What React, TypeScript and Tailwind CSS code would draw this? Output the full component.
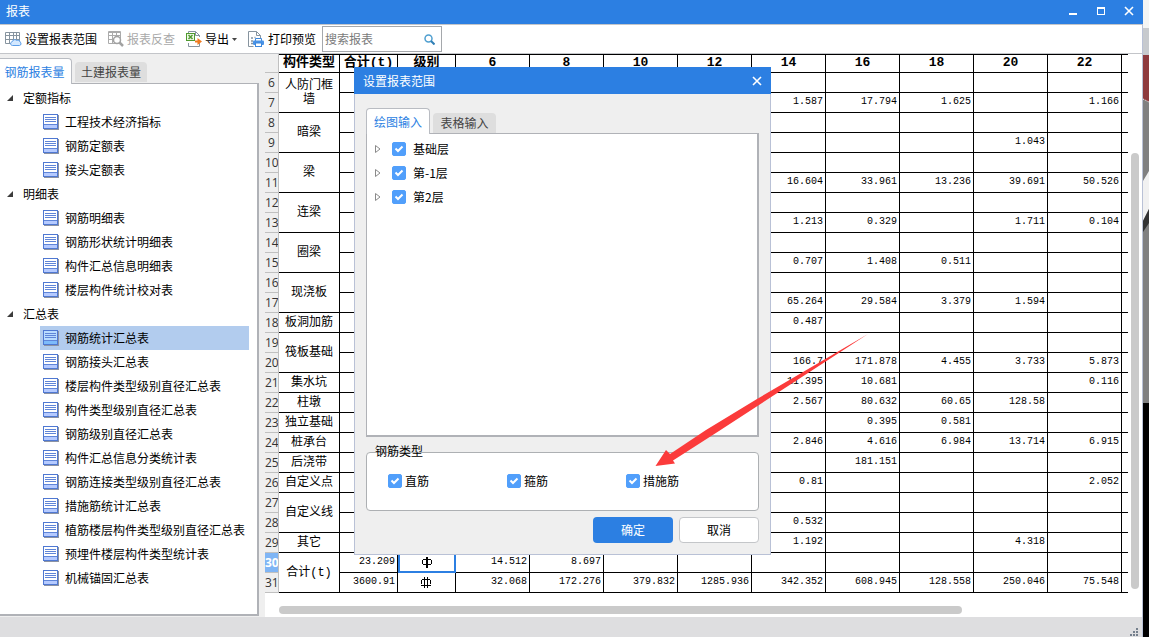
import { useState } from 'react'
import type { ReactNode } from 'react'

const treeGroups = [
  { label: '定额指标', items: ['工程技术经济指标', '钢筋定额表', '接头定额表'] },
  { label: '明细表', items: ['钢筋明细表', '钢筋形状统计明细表', '构件汇总信息明细表', '楼层构件统计校对表'] },
  {
    label: '汇总表',
    items: [
      '钢筋统计汇总表',
      '钢筋接头汇总表',
      '楼层构件类型级别直径汇总表',
      '构件类型级别直径汇总表',
      '钢筋级别直径汇总表',
      '构件汇总信息分类统计表',
      '钢筋连接类型级别直径汇总表',
      '措施筋统计汇总表',
      '植筋楼层构件类型级别直径汇总表',
      '预埋件楼层构件类型统计表',
      '机械锚固汇总表',
    ],
  },
]

const diameters = ['6', '8', '10', '12', '14', '16', '18', '20', '22']

type Row = {
  no: number
  type?: string
  span?: number
  total?: string
  grade?: 'two' | 'three'
  values?: Record<string, string>
}

const rows: Row[] = [
  { no: 6, type: '人防门框墙', span: 2 },
  { no: 7, values: { '14': '1.587', '16': '17.794', '18': '1.625', '22': '1.166' } },
  { no: 8, type: '暗梁', span: 2 },
  { no: 9, values: { '20': '1.043' } },
  { no: 10, type: '梁', span: 2 },
  { no: 11, values: { '14': '16.604', '16': '33.961', '18': '13.236', '20': '39.691', '22': '50.526' } },
  { no: 12, type: '连梁', span: 2 },
  { no: 13, values: { '14': '1.213', '16': '0.329', '20': '1.711', '22': '0.104' } },
  { no: 14, type: '圈梁', span: 2 },
  { no: 15, values: { '14': '0.707', '16': '1.408', '18': '0.511' } },
  { no: 16, type: '现浇板', span: 2 },
  { no: 17, values: { '14': '65.264', '16': '29.584', '18': '3.379', '20': '1.594' } },
  { no: 18, type: '板洞加筋', span: 1, values: { '14': '0.487' } },
  { no: 19, type: '筏板基础', span: 2 },
  { no: 20, values: { '14': '166.7', '16': '171.878', '18': '4.455', '20': '3.733', '22': '5.873' } },
  { no: 21, type: '集水坑', span: 1, values: { '14': '11.395', '16': '10.681', '22': '0.116' } },
  { no: 22, type: '柱墩', span: 1, values: { '14': '2.567', '16': '80.632', '18': '60.65', '20': '128.58' } },
  { no: 23, type: '独立基础', span: 1, values: { '16': '0.395', '18': '0.581' } },
  { no: 24, type: '桩承台', span: 1, values: { '14': '2.846', '16': '4.616', '18': '6.984', '20': '13.714', '22': '6.915' } },
  { no: 25, type: '后浇带', span: 1, values: { '16': '181.151' } },
  { no: 26, type: '自定义点', span: 1, values: { '14': '0.81', '22': '2.052' } },
  { no: 27, type: '自定义线', span: 2 },
  { no: 28, values: { '14': '0.532' } },
  { no: 29, type: '其它', span: 1, values: { '14': '1.192', '20': '4.318' } },
  { no: 30, type: '合计(t)', span: 2, total: '23.209', grade: 'two', values: { '6': '14.512', '8': '8.697' } },
  {
    no: 31,
    total: '3600.91',
    grade: 'three',
    values: {
      '6': '32.068',
      '8': '172.276',
      '10': '379.832',
      '12': '1285.936',
      '14': '342.352',
      '16': '608.945',
      '18': '128.558',
      '20': '250.046',
      '22': '75.548',
    },
  },
]

function SheetIcon({ active }: { active: boolean }) {
  return (
    <svg width="16" height="16" viewBox="0 0 16 16" shapeRendering="crispEdges" className="shrink-0" aria-hidden="true">
      <path d="M1 15.5h15M15.5 1v15" stroke="#8c93a3" />
      <rect x="0.5" y="0.5" width="14" height="14" fill={active ? '#b9dcff' : '#ffffff'} stroke="#4f78d2" />
      <rect x="1" y="10" width="13" height="4" fill={active ? '#7dbbfb' : '#b5caff'} />
      <path d="M2 3.5h11M2 5.5h11M2 7.5h11M1 10.5h13" stroke="#5f85d8" />
    </svg>
  )
}

function RangeIcon() {
  return (
    <svg width="17" height="16" viewBox="0 0 17 16" fill="none" aria-hidden="true">
      <path d="M0.5 1.5h14v11h-14zM0.5 4.5h14M0.5 8.5h14M4.5 1.5v11M8.5 1.5v11M11.5 1.5v7" stroke="#87949f" />
      <path d="M7.500 14.500c-2.500 0-2.500-3.500 0-4 0-2 3-2.500 4-1 2-.8 3.500 0 3.500 1.500 1.500.500 1.300 3.500-.500 3.500z" fill="#d3e8ff" stroke="#5b9de8" />
    </svg>
  )
}

function CheckBackIcon() {
  return (
    <svg width="16" height="16" viewBox="0 0 16 16" fill="none" aria-hidden="true">
      <path d="M0.500 0.500h12v12h-12zM0.500 4.500h12M0.500 8.500h12M4.500 0.500v12M8.500 0.500v8" stroke="#ababab" />
      <path d="M1 1.500h11" stroke="#ababab" />
      <circle cx="9" cy="9" r="3.500" fill="#fff" stroke="#a2a2a2" strokeWidth="1.500" />
      <path d="M11.500 11.500l3.500 3.500" stroke="#a2a2a2" strokeWidth="2.500" />
    </svg>
  )
}

function ExportIcon() {
  return (
    <svg width="16" height="16" viewBox="0 0 16 16" fill="none" aria-hidden="true">
      <path d="M2.500 2V0.500h7l4 4V6M13.500 12v3.500h-11V12M9.500 0.500v4h4" stroke="#87949f" />
      <rect x="0.500" y="2.500" width="8" height="7" fill="#eef7e6" stroke="#4f9a2f" />
      <path d="M2.500 4l4 4M6.500 4l-4 4" stroke="#4f9a2f" strokeWidth="1.500" />
      <path d="M9 9.500h2.500V7L16 10.500 11.500 14v-2.500H9z" fill="#f07b20" />
    </svg>
  )
}

function PrintIcon() {
  return (
    <svg width="17" height="16" viewBox="0 0 17 16" fill="none" aria-hidden="true">
      <path d="M12.500 7V4.500l-4-4h-8v15h5M8.500 0.500v4h4" stroke="#87949f" />
      <path d="M3 7h2M3 10h2M3 12.500h2M6.500 6.500h1" stroke="#87949f" strokeWidth="1.500" />
      <path d="M7.500 10V7.500h6V10" stroke="#3e88dc" />
      <rect x="5" y="9.500" width="11" height="4.500" rx="1" fill="#4a93e6" />
      <rect x="7.500" y="12" width="6" height="3.500" fill="#fff" stroke="#3e88dc" />
    </svg>
  )
}

// steel grade marks used in the 级别 column
function GradeMark({ grade }: { grade: 'two' | 'three' }) {
  return (
    <svg
      width="11"
      height="11"
      viewBox="0 0 11 11"
      fill="none"
      stroke="#000"
      shapeRendering="crispEdges"
      className="mx-auto"
      role="img"
      aria-label={grade === 'two' ? 'HRB335' : 'HRB400'}
    >
      {grade === 'two' ? (
        <>
          <path d="M1 2.500h8M0.500 3v4M9.500 3v4M1 7.500h8" />
          <path d="M5 0v11" strokeWidth="2" />
        </>
      ) : (
        <>
          <path d="M1 2.500h8M0.500 3v4M9.500 3v4M0 8.500h10" />
          <path d="M3.500 0v11M6.500 0v11" />
        </>
      )}
    </svg>
  )
}

function ToolButton({ icon, children, disabled }: { icon: ReactNode; children: ReactNode; disabled?: boolean }) {
  return (
    <button
      disabled={disabled}
      className="flex h-6 shrink-0 items-center gap-[3px] rounded-sm pr-[6px] pl-[5px] text-black disabled:text-[#a9a9a9]"
    >
      {icon}
      {children}
    </button>
  )
}

function CheckField({ label }: { label: string }) {
  return (
    <label className="flex items-center gap-[3px]">
      <span className="grid">
        <input
          type="checkbox"
          defaultChecked
          className="peer col-start-1 row-start-1 size-3.5 appearance-none rounded-xs border border-[#519ffb] bg-white checked:bg-[#519ffb]"
        />
        <svg
          width="14"
          height="14"
          viewBox="0 0 14 14"
          fill="none"
          className="pointer-events-none invisible col-start-1 row-start-1 peer-checked:visible"
          aria-hidden="true"
        >
          <path d="M3.500 6.500L6 9l4.500-4.500" stroke="#fff" strokeWidth="2" />
        </svg>
      </span>
      {label}
    </label>
  )
}

function Sidebar() {
  const [selected, setSelected] = useState('钢筋统计汇总表')

  return (
    <aside className="flex w-[259px] shrink-0 flex-col pb-px">
      <div className="flex h-[29px] items-end gap-[3px]">
        <button className="z-10 -mb-px h-[26px] w-[72px] rounded-tr-sm border-t border-r border-[#b9bcc2] bg-white pr-[2px] text-[#2c7fe2]">
          钢筋报表量
        </button>
        <button className="mb-px h-5 w-[72px] rounded-t-sm bg-[#dedede] text-[#444]">土建报表量</button>
      </div>
      <nav className="flex-1 border-t border-r-2 border-b-2 border-[#b0b2b7] bg-white pt-[2px]">
        {treeGroups.map((group) => (
          <div key={group.label}>
            <button className="flex h-6 items-center gap-[10px] pl-[7px]">
              <svg width="6" height="6" viewBox="0 0 6 6" aria-hidden="true">
                <path d="M6 0v6H0z" fill="#3c3c3c" />
              </svg>
              {group.label}
            </button>
            {group.items.map((item) => (
              <button
                key={item}
                onClick={() => setSelected(item)}
                className={`ml-10 flex h-6 w-[209px] items-center gap-[6px] pl-[3px] whitespace-nowrap ${
                  item === selected ? 'bg-[#b2ccee]' : ''
                }`}
              >
                <SheetIcon active={item === selected} />
                {item}
              </button>
            ))}
          </div>
        ))}
      </nav>
    </aside>
  )
}

function ReportTable() {
  return (
    <table className="w-full table-fixed border-separate border-spacing-0 font-['Liberation_Mono','Noto_Sans_CJK_SC',monospace] text-black">
      <colgroup>
        <col className="w-[14px]" />
        <col className="w-[61px]" />
        <col className="w-[58px]" />
        <col className="w-[58px]" />
        {diameters.map((d) => (
          <col key={d} className="w-[74px]" />
        ))}
        <col />
      </colgroup>
      <thead>
        <tr className="h-[19px] text-[13px] leading-[15px]">
          <th className="border-r border-b border-[#c0c0c0] bg-[#efefef] p-0" />
          {['构件类型', '合计(t)', '级别', ...diameters].map((h) => (
            <th key={h} className="border-t border-r border-b border-black px-0 pt-0 pb-[2px] font-bold whitespace-nowrap">
              {h}
            </th>
          ))}
          <th className="border-t border-b border-black p-0" />
        </tr>
      </thead>
      <tbody>
        {rows.map((row) => (
          <tr key={row.no} className="h-5 text-[10px] leading-4">
            <th
              className={`overflow-hidden border-r border-b border-[#c0c0c0] p-0 text-center font-['Open_Sans',sans-serif] text-xs ${
                row.no === 30 ? 'bg-[#7fb5f5] font-bold text-white' : 'bg-[#efefef] font-normal text-[#333]'
              }`}
            >
              {row.no}
            </th>
            {row.type && (
              <td rowSpan={row.span} className="border-r border-b border-black px-[5px] py-0 text-center text-xs leading-[14px]">
                {row.type}
              </td>
            )}
            <td className="border-r border-b border-black pt-0 pr-[2px] pb-[2px] pl-0 text-right">{row.total}</td>
            <td
              className={`p-0 ${
                row.no === 30
                  ? 'border-r-2 border-b-2 border-l-2 border-[#2c7fe2]'
                  : 'border-r border-b border-black'
              }`}
            >
              {row.grade && <GradeMark grade={row.grade} />}
            </td>
            {diameters.map((d) => (
              <td key={d} className="border-r border-b border-black pt-0 pr-[2px] pb-[2px] pl-0 text-right">
                {row.values?.[d]}
              </td>
            ))}
            <td className="border-b border-black p-0" />
          </tr>
        ))}
      </tbody>
    </table>
  )
}

function RangeDialog() {
  return (
    <section
      role="dialog"
      aria-label="设置报表范围"
      className="absolute top-[67px] left-[354px] w-[417px] border-r border-b border-l border-[#b9c1d6] bg-[#efefef]"
    >
      <header className="-mx-px flex h-[27px] items-center justify-between bg-[#2c7fe2] pr-[9px] pl-[9px] text-white">
        <h2>设置报表范围</h2>
        <button aria-label="关闭">
          <svg width="10" height="10" viewBox="0 0 10 10" aria-hidden="true">
            <path d="M1 1l8 8M9 1l-8 8" stroke="#fff" strokeWidth="1.600" />
          </svg>
        </button>
      </header>
      <div className="px-[11px] pt-[14px] pb-[11px]">
        <div className="flex items-end gap-[3px]">
          <button className="z-10 -mb-px h-[26px] w-16 rounded-t-sm border-t border-r border-l border-[#b9bcc2] bg-white text-[#2c7fe2]">
            绘图输入
          </button>
          <button className="h-5 w-[63px] rounded-t-sm bg-[#dedede] text-[#444]">表格输入</button>
        </div>
        <div className="h-[304px] border border-r-2 border-b-2 border-[#b0b2b7] bg-white pt-[3px]">
          {['基础层', '第-1层', '第2层'].map((floor) => (
            <div key={floor} className="flex h-6 items-center gap-[11px] pl-2">
              <button aria-label={`展开${floor}`}>
                <svg width="6" height="8" viewBox="0 0 6 8" fill="none" aria-hidden="true">
                  <path d="M0.500 0.500v7L5 4z" stroke="#8a8a8a" />
                </svg>
              </button>
              <div className="[&>label]:gap-[7px]">
                <CheckField label={floor} />
              </div>
            </div>
          ))}
        </div>
        <fieldset className="mt-[6px]">
          <legend className="relative ml-[9px] leading-4">钢筋类型</legend>
          <div className="-mt-[7px] grid grid-cols-[119px_119px_1fr] rounded-sm border border-[#adb0b3] bg-white px-[21px] pt-5 pb-[21px] leading-4">
            <CheckField label="直筋" />
            <CheckField label="箍筋" />
            <CheckField label="措施筋" />
          </div>
        </fieldset>
        <div className="mt-[6px] flex justify-end gap-[6px]">
          <button className="h-[26px] w-20 rounded-sm bg-[#2c7fe2] text-white">确定</button>
          <button className="h-[26px] w-20 rounded-sm border border-[#c4c6c9] bg-white">取消</button>
        </div>
      </div>
    </section>
  )
}

function Arrow() {
  return (
    <svg
      width="220"
      height="140"
      viewBox="650 330 220 140"
      className="pointer-events-none absolute top-[330px] left-[650px]"
      aria-hidden="true"
    >
      <path d="M655.500 466L666 450l4 4L706 430l51-31L868 334 765 401l-46 30-46 29.500 2 3z" fill="#fb3b3b" />
    </svg>
  )
}

export default function App() {
  return (
    <div className="relative flex min-h-screen overflow-hidden bg-[#efefef] font-['Noto_Sans_CJK_SC',sans-serif] text-xs text-black">
      <div className="flex min-w-0 flex-1 flex-col border-r border-[#b9c1d6]">
        <header className="-mr-px flex h-6 items-center justify-between bg-[#2c7fe2] pr-[9px] pb-[2px] pl-[6px] text-white">
          <h1>报表</h1>
          <div className="flex gap-[18px]">
            <button aria-label="最小化">
              <svg width="10" height="10" viewBox="0 0 10 10" aria-hidden="true">
                <path d="M1 8h8" stroke="#fff" strokeWidth="2" />
              </svg>
            </button>
            <button aria-label="最大化">
              <svg width="10" height="10" viewBox="0 0 10 10" fill="none" shapeRendering="crispEdges" aria-hidden="true">
                <path d="M1.500 2v6.500h7V2M1 2.500h8M1 1.500h8" stroke="#fff" />
              </svg>
            </button>
            <button aria-label="关闭窗口">
              <svg width="10" height="10" viewBox="0 0 10 10" aria-hidden="true">
                <path d="M1 1l8 8M9 1l-8 8" stroke="#fff" strokeWidth="1.600" />
              </svg>
            </button>
          </div>
        </header>

        <div className="flex h-[30px] items-center border-t border-b border-[#c3c5c9] bg-white">
          <ToolButton icon={<RangeIcon />}>设置报表范围</ToolButton>
          <ToolButton icon={<CheckBackIcon />} disabled>
            报表反查
          </ToolButton>
          <ToolButton icon={<ExportIcon />}>
            导出
            <svg width="5" height="3" viewBox="0 0 5 3" aria-hidden="true">
              <path d="M0 0h5L2.500 3z" fill="#444" />
            </svg>
          </ToolButton>
          <ToolButton icon={<PrintIcon />}>打印预览</ToolButton>
          <div className="flex h-[26px] w-[120px] shrink-0 items-center border border-[#a5a8ac] bg-white pr-[6px] pl-[2px]">
            <input
              type="search"
              aria-label="搜索报表"
              placeholder="搜索报表"
              className="min-w-0 flex-1 outline-none placeholder:text-[#7b7b7b]"
            />
            <button aria-label="搜索">
              <svg width="11" height="11" viewBox="0 0 11 11" fill="none" aria-hidden="true">
                <circle cx="4.500" cy="4.500" r="3.500" stroke="#4f9fd0" strokeWidth="1.500" />
                <path d="M7 7l3.500 3.500" stroke="#2f7fb5" strokeWidth="2" />
              </svg>
            </button>
          </div>
        </div>

        <div className="flex flex-1">
          <Sidebar />
          <main className="ml-[6px] flex min-w-0 flex-1 flex-col bg-white">
            <div className="flex">
              <div className="min-w-0 flex-1">
                <ReportTable />
              </div>
              <div className="flex w-[14px] flex-col px-[3px] pt-[99px] pb-1">
                <div className="w-2 flex-1 rounded-full bg-[#cacaca]" />
              </div>
            </div>
            <div className="mt-auto pr-[180px] pb-[3px] pl-[14px]">
              <div className="h-2 rounded-full bg-[#cacaca]" />
            </div>
          </main>
        </div>

        <footer className="flex h-5 items-end justify-end bg-[#dedee0] pr-[3px]">
          <svg width="9" height="9" viewBox="0 0 9 9" shapeRendering="crispEdges" aria-hidden="true">
            <path d="M6 0h2v2H6zM3 3h2v2H3zM6 3h2v2H6zM0 6h2v2H0zM3 6h2v2H3zM6 6h2v2H6z" fill="#75808d" />
          </svg>
        </footer>
      </div>

      {/* sliver of the 3D view behind the window */}
      <svg
        width="6"
        height="637"
        viewBox="0 0 6 637"
        preserveAspectRatio="none"
        className="shrink-0 self-stretch"
        aria-hidden="true"
      >
        <path d="M0 0h6v637H0z" fill="#808080" />
        <path d="M0 0h6v28H0z" fill="#f4f5f4" />
        <path d="M0 28h6v27H0z" fill="#c7cace" />
        <path d="M0 55h6v47L0 99z" fill="#8e3a3e" />
        <path d="M0 99l6 3" stroke="#fff" strokeDasharray="1 1" />
        <path d="M6 171v38L0 221v-40z" fill="#f1f1f1" />
        <path d="M6 209v14L0 232v-11z" fill="#333" />
        <path d="M0 403h6v234H0z" fill="#000" />
      </svg>

      <RangeDialog />
      <Arrow />
    </div>
  )
}
